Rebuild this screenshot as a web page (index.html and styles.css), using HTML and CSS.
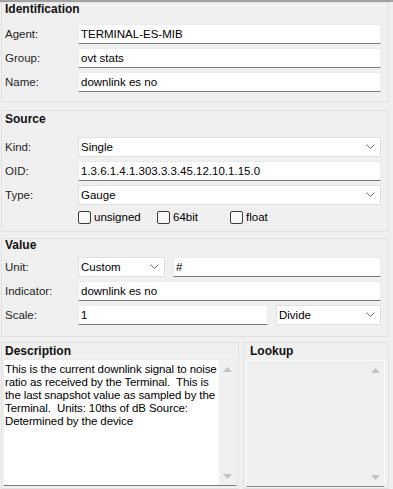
FILE: index.html
```html
<!doctype html>
<html>
<head>
<meta charset="utf-8">
<title>Indicator properties</title>
<link rel="stylesheet" href="styles.css">
</head>
<body>
	<div class="group group-ident">
		<div class="group-title">Identification</div>
		<div class="fields">
			<label>Agent:</label><div class="edit">TERMINAL-ES-MIB</div>
			<label>Group:</label><div class="edit">ovt stats</div>
			<label>Name:</label><div class="edit">downlink es no</div>
		</div>
	</div>

	<div class="group group-source">
		<div class="group-title">Source</div>
		<div class="fields">
			<label>Kind:</label>
			<div class="combo"><span>Single</span><svg width="9" height="6" viewBox="0 0 9 6"><polyline points="0.5,0.5 4.5,4.5 8.5,0.5" fill="none" stroke="#7a7a7a" stroke-width="1"/></svg></div>
			<label>OID:</label><div class="edit">1.3.6.1.4.1.303.3.3.45.12.10.1.15.0</div>
			<label>Type:</label>
			<div class="combo"><span>Gauge</span><svg width="9" height="6" viewBox="0 0 9 6"><polyline points="0.5,0.5 4.5,4.5 8.5,0.5" fill="none" stroke="#7a7a7a" stroke-width="1"/></svg></div>
			<span></span>
			<div class="checks">
				<div class="check check-unsigned"><span class="box"></span>unsigned</div>
				<div class="check check-64"><span class="box"></span>64bit</div>
				<div class="check"><span class="box"></span>float</div>
			</div>
		</div>
	</div>

	<div class="group group-value">
		<div class="group-title">Value</div>
		<div class="fields">
			<label>Unit:</label>
			<div class="pair pair-unit">
				<div class="combo"><span>Custom</span><svg width="9" height="6" viewBox="0 0 9 6"><polyline points="0.5,0.5 4.5,4.5 8.5,0.5" fill="none" stroke="#7a7a7a" stroke-width="1"/></svg></div>
				<div class="edit">#</div>
			</div>
			<label>Indicator:</label><div class="edit">downlink es no</div>
			<label>Scale:</label>
			<div class="pair pair-scale">
				<div class="edit">1</div>
				<div class="combo"><span>Divide</span><svg width="9" height="6" viewBox="0 0 9 6"><polyline points="0.5,0.5 4.5,4.5 8.5,0.5" fill="none" stroke="#7a7a7a" stroke-width="1"/></svg></div>
			</div>
		</div>
	</div>

	<div class="bottom">
		<div class="group group-desc">
			<div class="group-title">Description</div>
			<div class="memo">
				<div class="memo-text">This is the current downlink signal to noise
ratio as received by the Terminal.  This is
the last snapshot value as sampled by the
Terminal.  Units: 10ths of dB Source:
Determined by the device</div>
				<div class="vscroll">
					<svg width="9" height="5" viewBox="0 0 9 5"><polygon points="0,5 4.5,0 9,5" fill="#c2c2c2"/></svg>
					<svg width="9" height="5" viewBox="0 0 9 5"><polygon points="0,0 4.5,5 9,0" fill="#c2c2c2"/></svg>
				</div>
			</div>
		</div>
		<div class="group group-lookup">
			<div class="group-title">Lookup</div>
			<div class="list">
				<div class="list-body"></div>
				<div class="vscroll">
					<svg width="9" height="5" viewBox="0 0 9 5"><polygon points="0,5 4.5,0 9,5" fill="#c2c2c2"/></svg>
					<svg width="9" height="5" viewBox="0 0 9 5"><polygon points="0,0 4.5,5 9,0" fill="#c2c2c2"/></svg>
				</div>
			</div>
		</div>
	</div>
</body>
</html>
```

FILE: styles.css
```css
*{
	margin:0;
	padding:0;
	box-sizing:border-box;
}
body{
	background:#f0f0f0;
	border-top:2px solid #a3a3a3;
	font-family:"Segoe UI","Liberation Sans",Arial,sans-serif;
	font-size:11.5px;
	color:#000;
	height:489px;
	overflow:hidden;
}
.group{
	border:1px solid #e2e2e2;
	margin:0 4px 0 1px;
}
.group-title{
	font-weight:bold;
	font-size:12px;
	height:12px;
	line-height:12px;
	padding-left:3px;
	color:#111;
}
.fields{
	display:grid;
	grid-template-columns:73px 1fr;
	row-gap:4px;
	padding:0 7px 0 3px;
	align-items:center;
}
.fields label{
	height:20px;
	line-height:20px;
	color:#1e1e1e;
}
.group-ident .fields{ margin-top:9px; }
.group-ident{ padding-bottom:9px; }

.group-source{ margin-top:8px; padding-bottom:6px; }
.group-source .group-title{ margin-top:2px; }
.group-source .fields{ margin-top:12px; }

.group-value{ margin-top:6px; padding-bottom:11px; }
.group-value .fields{ margin-top:6px; }

.edit, .combo{
	height:20px;
	line-height:18px;
	padding-left:2px;
	background:#fff;
	border:1px solid #ececec;
	white-space:nowrap;
	overflow:hidden;
}
.edit{
	border-bottom-color:#7a7a7a;
}
.combo{
	display:flex;
	align-items:center;
	justify-content:space-between;
	border-color:#e1e1e1;
	padding-right:5px;
}
.checks{
	display:flex;
	height:16px;
	align-items:center;
}
.check{
	display:flex;
	align-items:center;
	gap:3px;
}
.check-unsigned{ width:79px; }
.check-64{ width:73px; }
.box{
	width:13px;
	height:13px;
	border:1px solid #3c3c3c;
	border-radius:2px;
	background:#f8f8f8;
}
.pair{
	display:grid;
	gap:8px;
}
.pair-unit{ grid-template-columns:87px 1fr; }
.pair-scale{ grid-template-columns:1fr 105px; }

.bottom{
	display:flex;
	gap:4px;
	margin-top:5px;
	margin-right:4px;
	margin-left:1px;
}
.bottom .group{
	margin:0;
	height:147px;
}
.bottom .group-title{
	margin-top:2px;
}
.group-desc{ width:238px; }
.group-lookup{ flex:1; }
.group-lookup .group-title{ padding-left:6px; }

.memo, .list{
	display:flex;
	margin:2px 1px 0 1px;
	height:127px;
}
.memo{
	background:#fff;
	border:1px solid #ececec;
	border-bottom-color:#7a7a7a;
}
.memo-text{
	flex:1;
	white-space:pre;
	padding:3px 0 0 1px;
	line-height:13px;
	letter-spacing:-0.1px;
	overflow:hidden;
}
.list{
	margin:3px 3px 0 2px;
	border:1px solid #fafafa;
	border-bottom-color:#8a8a8a;
}
.list-body{
	flex:1;
	background:#efefef;
}
.vscroll{
	width:17px;
	background:#f0f0f0;
	display:flex;
	flex-direction:column;
	justify-content:space-between;
	align-items:center;
	padding:7px 0 6px;
}
```
